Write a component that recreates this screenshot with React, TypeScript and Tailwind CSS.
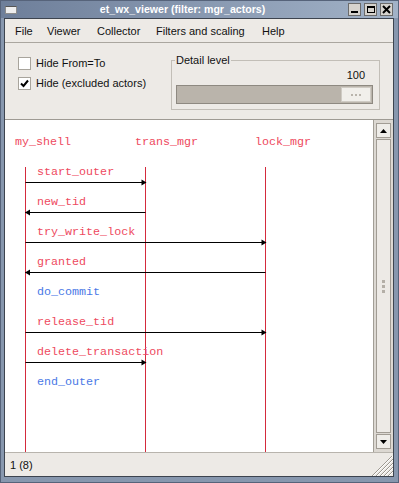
import React from 'react';

type Msg = { label: string; from?: number; to?: number; blue?: boolean };

const ACTORS = [
  { name: 'my_shell', x: 25 },
  { name: 'trans_mgr', x: 145 },
  { name: 'lock_mgr', x: 265 },
];

const MESSAGES: Msg[] = [
  { label: 'start_outer', from: 25, to: 145 },
  { label: 'new_tid', from: 145, to: 25 },
  { label: 'try_write_lock', from: 25, to: 265 },
  { label: 'granted', from: 265, to: 25 },
  { label: 'do_commit', blue: true },
  { label: 'release_tid', from: 25, to: 265 },
  { label: 'delete_transaction', from: 25, to: 145 },
  { label: 'end_outer', blue: true },
];

function TitleBar() {
  return (
    <div className="h-[17px] flex items-center pl-[4px] pr-[5px] bg-gradient-to-r from-[#6e7f9a] to-[#a2b2c7]">
      <div className="w-[12px] h-[8px] bg-[#eeeeee] border border-[#8c8c8c] border-t-[#555]" />
      <div className="flex-1 text-center text-white font-bold text-[10.6px] leading-[17px]">
        et_wx_viewer (filter: mgr_actors)
      </div>
      <div className="flex gap-[3px]">
        <div className="w-[13px] h-[13px] bg-[#d6d3ce] border border-[#6b6b6b] flex items-end justify-center pb-[2px]">
          <div className="w-[7px] h-[2px] bg-black" />
        </div>
        <div className="w-[13px] h-[13px] bg-[#d6d3ce] border border-[#6b6b6b] flex items-center justify-center">
          <div className="w-[8px] h-[7px] border border-black border-t-2" />
        </div>
        <div className="w-[13px] h-[13px] bg-[#d6d3ce] border border-[#6b6b6b] flex items-center justify-center">
          <svg width="9" height="9" viewBox="0 0 9 9">
            <path d="M1 1 L8 8 M8 1 L1 8" stroke="black" strokeWidth="2" />
          </svg>
        </div>
      </div>
    </div>
  );
}

function MenuBar() {
  const items = [
    { t: 'File', w: 'w-[32px]' },
    { t: 'Viewer', w: 'w-[50px]' },
    { t: 'Collector', w: 'w-[59px]' },
    { t: 'Filters and scaling', w: 'w-[106px]' },
    { t: 'Help', w: 'w-[40px]' },
  ];
  return (
    <div className="h-[24px] flex items-center pl-[10px] border-b border-[#aaa69f] bg-[#edeae6]">
      {items.map((i) => (
        <span key={i.t} className={`${i.w} text-[11px] text-[#111] leading-[14px] pt-[1px]`}>
          {i.t}
        </span>
      ))}
    </div>
  );
}

function Checkbox({ checked, label }: { checked?: boolean; label: string }) {
  return (
    <div className="flex items-center h-[13px]">
      <div className="w-[13px] h-[13px] bg-white border border-[#a8a49c] flex items-center justify-center">
        {checked && (
          <svg width="9" height="9" viewBox="0 0 9 9">
            <path d="M1 4.5 L3.5 7 L8 1.5" stroke="black" strokeWidth="2" fill="none" />
          </svg>
        )}
      </div>
      <span className="ml-[5px] text-[11px] text-[#111] leading-[13px]">{label}</span>
    </div>
  );
}

function Controls() {
  return (
    <div className="h-[77px] flex border-b border-[#9e9a93] bg-[#edeae6]">
      <div className="w-[166px] pl-[13px] pt-[14px] flex flex-col gap-[7px]">
        <Checkbox label="Hide From=To" />
        <Checkbox checked label="Hide (excluded actors)" />
      </div>
      <div className="mt-[17px] w-[209px] h-[50px] border border-[#c2beb7] relative">
        <span className="absolute left-[3px] top-[-7px] px-[1px] bg-[#edeae6] text-[11px] leading-[13px] text-[#111]">
          Detail level
        </span>
        <div className="pt-[8px] pr-[14px] text-right text-[11px] leading-[13px] text-[#111]">100</div>
        <div className="mt-[3px] ml-[4px] w-[197px] h-[19px] border border-[#8e8981] bg-[#bab4ab] flex items-center justify-end pr-[1px]">
          <div className="w-[30px] h-[15px] bg-[#f1efeb] border border-[#cfcbc4] flex items-center justify-center gap-[2px]">
            <div className="w-[2px] h-[2px] bg-[#b9b4ac]" />
            <div className="w-[2px] h-[2px] bg-[#b9b4ac]" />
            <div className="w-[2px] h-[2px] bg-[#b9b4ac]" />
          </div>
        </div>
      </div>
    </div>
  );
}

function Diagram() {
  const textCls = "font-['Liberation_Mono',monospace] text-[11.7px]";
  return (
    <svg width="368" height="333" viewBox="5 120 368 333" className="block">
      {ACTORS.map((a) => (
        <g key={a.name}>
          <text x={a.x - 10} y={145} className={textCls} fill="#ee4a60">
            {a.name}
          </text>
          <line x1={a.x + 0.5} y1={167} x2={a.x + 0.5} y2={453} stroke="#d42a3c" strokeWidth="1" />
        </g>
      ))}
      {MESSAGES.map((m, i) => {
        const base = 175 + i * 30;
        const ay = 182.5 + i * 30;
        const right = m.from !== undefined && m.to !== undefined && m.to > m.from;
        return (
          <g key={m.label}>
            <text x={37} y={base} className={textCls} fill={m.blue ? '#4a78e6' : '#ee4a60'}>
              {m.label}
            </text>
            {m.from !== undefined && m.to !== undefined && (
              <>
                <line x1={m.from + 0.5} y1={ay} x2={m.to + 0.5} y2={ay} stroke="black" strokeWidth="1" />
                {right ? (
                  <polygon points={`${m.to + 1.5},${ay} ${m.to - 3.5},${ay - 3} ${m.to - 3.5},${ay + 3}`} fill="black" />
                ) : (
                  <polygon points={`${m.to},${ay} ${m.to + 5},${ay - 3} ${m.to + 5},${ay + 3}`} fill="black" />
                )}
              </>
            )}
          </g>
        );
      })}
    </svg>
  );
}

function Scrollbar() {
  const btn = 'h-[15px] bg-[#efede9] border border-[#a19c94] flex items-center justify-center';
  return (
    <div className="w-[20px] border-l border-[#a29e96] bg-[#dcd8d2] flex flex-col px-[2px] py-[3px] gap-[1px]">
      <div className={btn}>
        <svg width="7" height="4" viewBox="0 0 7 4">
          <polygon points="3.5,0 7,4 0,4" fill="black" />
        </svg>
      </div>
      <div className="flex-1 bg-[#edeae6] border border-[#a19c94] flex flex-col items-center justify-center gap-[2px]">
        <div className="w-[3px] h-[3px] bg-[#b4afa7]" />
        <div className="w-[3px] h-[3px] bg-[#b4afa7]" />
        <div className="w-[3px] h-[3px] bg-[#b4afa7]" />
      </div>
      <div className={btn}>
        <svg width="7" height="4" viewBox="0 0 7 4">
          <polygon points="0,0 7,0 3.5,4" fill="black" />
        </svg>
      </div>
    </div>
  );
}

function StatusBar() {
  return (
    <div className="h-[24px] flex items-center border-t border-[#b8b4ad] bg-[#edeae6] relative">
      <span className="pl-[5px] pt-[2px] text-[11px] leading-[13px] text-[#111]">1 (8)</span>
      <svg width="22" height="20" viewBox="0 0 22 20" className="absolute right-0 bottom-0">
        {[5, 9, 13, 17, 21].map((k) => (
          <g key={k}>
            <line x1={22 - k} y1={20} x2={22} y2={20 - k} stroke="#9c978f" strokeWidth="1" />
            <line x1={23 - k} y1={20} x2={22} y2={21 - k} stroke="#ffffff" strokeWidth="1" />
          </g>
        ))}
      </svg>
    </div>
  );
}

export default function App() {
  return (
    <div className="w-[399px] h-[483px] bg-[#8797ae] border border-[#56637a] flex flex-col font-['Liberation_Sans',Arial,sans-serif] overflow-hidden">
      <TitleBar />
      <div className="ml-[3px] w-[390px] h-[459px] border border-[#3d444f] flex flex-col bg-[#edeae6]">
        <MenuBar />
        <Controls />
        <div className="flex-1 flex min-h-0">
          <div className="flex-1 bg-white overflow-hidden">
            <Diagram />
          </div>
          <Scrollbar />
        </div>
        <StatusBar />
      </div>
    </div>
  );
}
